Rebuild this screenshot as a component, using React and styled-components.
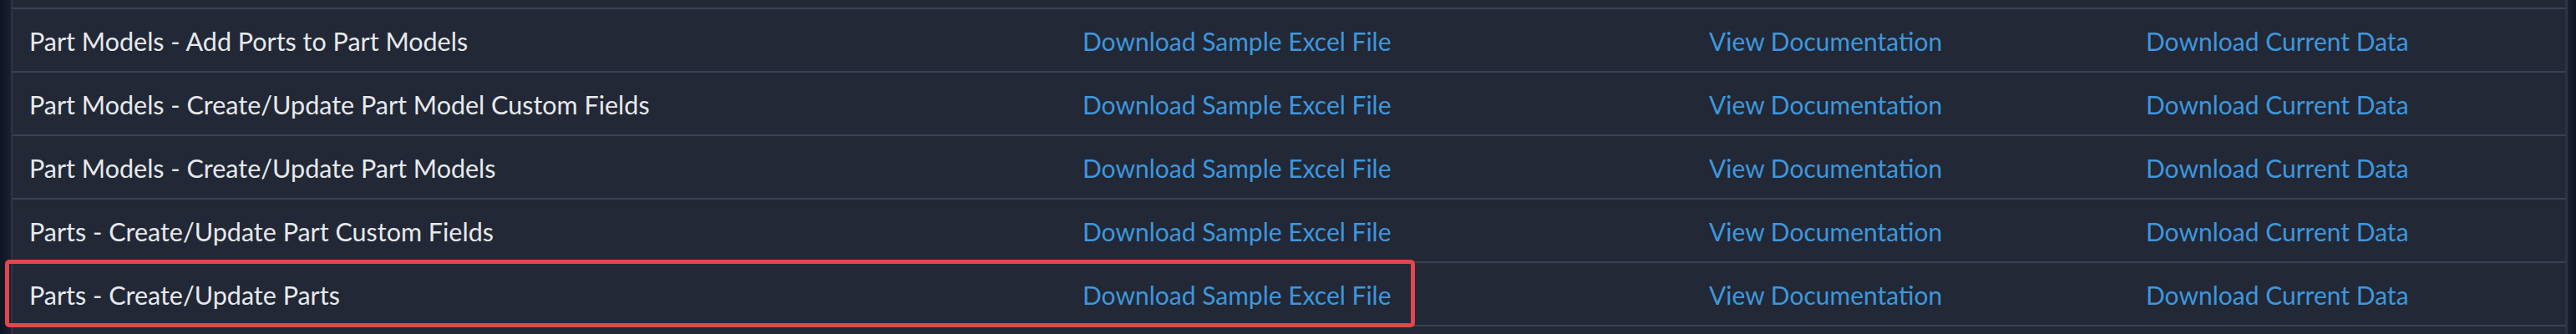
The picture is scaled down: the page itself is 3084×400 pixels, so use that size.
import React from 'react';
import styled, { createGlobalStyle } from 'styled-components';

const GlobalStyle = createGlobalStyle`
  html, body {
    margin: 0;
    padding: 0;
    background: #121827;
  }
  * {
    box-sizing: border-box;
  }
`;

const imports = [
  { name: 'Part Models - Add Ports to Part Models' },
  { name: 'Part Models - Create/Update Part Model Custom Fields' },
  { name: 'Part Models - Create/Update Part Models' },
  { name: 'Parts - Create/Update Part Custom Fields' },
  { name: 'Parts - Create/Update Parts', highlighted: true },
];

const App = () => {
  return (
    <>
      <GlobalStyle />
      <Viewport>
        <Panel>
          <Table>
            {imports.map((item) => (
              <Row key={item.name}>
                <TitleCell>{item.name}</TitleCell>
                <LinkCell>
                  <Link href="#">Download Sample Excel File</Link>
                </LinkCell>
                <LinkCell>
                  <Link href="#">View Documentation</Link>
                </LinkCell>
                <LinkCell>
                  <Link href="#">Download Current Data</Link>
                </LinkCell>
                {item.highlighted && <Highlight />}
              </Row>
            ))}
          </Table>
        </Panel>
      </Viewport>
    </>
  );
};

const Viewport = styled.div`
  height: 400px;
  overflow: hidden;
  padding: 0 10px 0 13px;
  background: linear-gradient(
    90deg,
    #0f1422 0px,
    #1a2030 13px,
    transparent 13px,
    transparent calc(100% - 11px),
    #1a2030 calc(100% - 11px),
    #0f1422 100%
  );
`;

/* scrolled list: a sliver of the previous row shows above the first one */
const Panel = styled.div`
  height: 100%;
  padding-top: 9px;
  background-color: #222836;
  border-left: 2px solid #2e3442;
  border-right: 3px solid #2e3442;
`;

const Table = styled.div`
  display: flex;
  flex-direction: column;
  border-top: 2px solid #3a4150;
`;

const Row = styled.div`
  position: relative;
  display: grid;
  grid-template-columns: 1261px 750px 523px 1fr;
  align-items: center;
  height: 76px;
  border-bottom: 2px solid #3a4150;
`;

const Cell = styled.div`
  padding-left: 20px;
  padding-top: 2px;
  font-family: 'Lato', 'Inter', sans-serif;
  font-size: 30px;
  white-space: nowrap;
`;

const TitleCell = styled(Cell)`
  color: #e7e9ec;
  font-size: 30.5px;
`;

const LinkCell = styled(Cell)``;

const Link = styled.a`
  color: #3e97dd;
  text-decoration: none;
`;

const Highlight = styled.div`
  position: absolute;
  left: -9px;
  top: -4px;
  width: 1688px;
  height: 81px;
  border: 5px solid #e2474c;
  border-radius: 5px;
  pointer-events: none;
`;

export default App;
